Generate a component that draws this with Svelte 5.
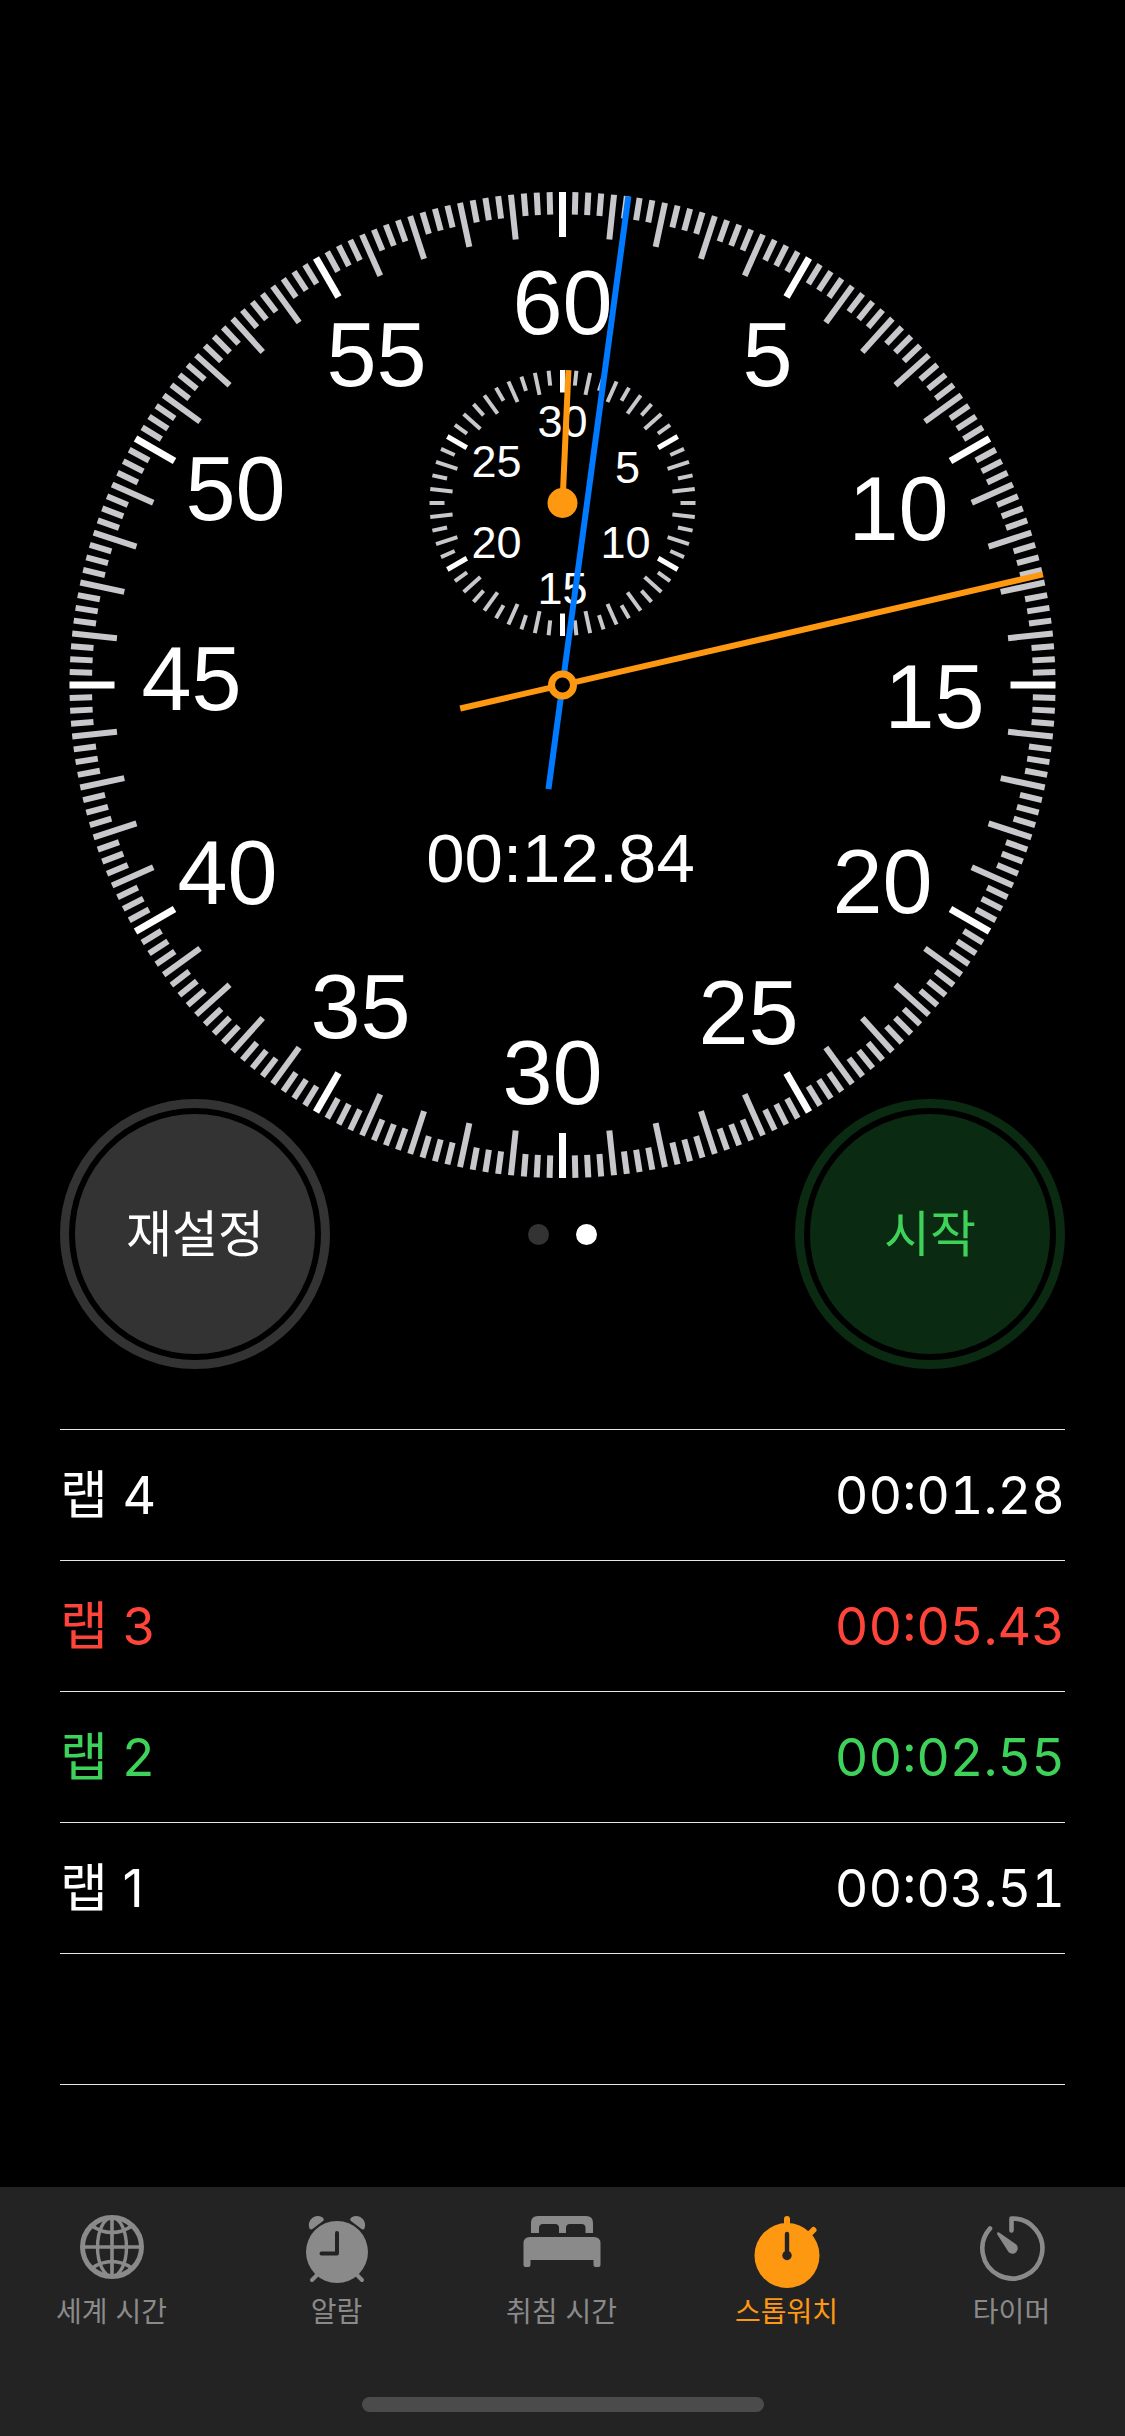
<script>
  const mainTicks = Array.from({ length: 240 }, (_, i) => ({
    angle: i * 1.5,
    kind: i % 20 === 0 ? 'hour' : i % 4 === 0 ? 'long' : 'short'
  }));
  const subTicks = Array.from({ length: 60 }, (_, i) => ({
    angle: i * 6,
    kind: i % 10 === 0 ? 'hour' : i % 2 === 0 ? 'long' : 'short'
  }));

  // Numeral centres, relative to the centre of the main dial.
  const mainNumbers = [
    [60, 0, -382], [5, 205, -330], [10, 336, -176], [15, 372, 12],
    [20, 320, 197], [25, 186, 328], [30, -10, 388], [35, -202, 322],
    [40, -335, 188], [45, -371, -6], [50, -327, -196], [55, -186, -330]
  ];
  // Numeral centres, relative to the centre of the minute dial.
  const subNumbers = [
    [30, 0, -82], [5, 65, -36], [10, 63, 39], [15, 0, 85], [20, -66, 39], [25, -66, -42]
  ];

  const elapsed = 12.84;
  const lapElapsed = 1.28;

  const laps = [
    { name: '랩 4', time: '00:01.28', tone: '' },
    { name: '랩 3', time: '00:05.43', tone: 'slow' },
    { name: '랩 2', time: '00:02.55', tone: 'fast' },
    { name: '랩 1', time: '00:03.51', tone: '' }
  ];

  const tabs = [
    { id: 'world', label: '세계 시간' },
    { id: 'alarm', label: '알람' },
    { id: 'bed', label: '취침 시간' },
    { id: 'stopwatch', label: '스톱워치' },
    { id: 'timer', label: '타이머' }
  ];
  let active = $state('stopwatch');
</script>

<div class="app">
  <main>
    <svg class="dial" viewBox="-494.5 -494 989 988" role="img" aria-label="스톱워치">
      {#each mainTicks as t}
        <line class="tick {t.kind}" y1="-493" y2={t.kind === 'short' ? -470.5 : -448} transform="rotate({t.angle})" />
      {/each}
      {#each mainNumbers as [n, x, y]}
        <text class="num" {x} y={y + 31}>{n}</text>
      {/each}

      <g transform="translate(0 -182)">
        {#each subTicks as t}
          <line class="tick sub {t.kind}" y1="-133" y2={t.kind === 'short' ? -118 : -110.5} transform="rotate({t.angle})" />
        {/each}
        {#each subNumbers as [n, x, y]}
          <text class="num small" {x} y={y + 16}>{n}</text>
        {/each}
        <line class="hand orange" y1="0" y2="-133" transform="rotate({elapsed / 5})" />
        <circle class="hub" r="15" />
      </g>

      <text class="num time" x="-2" y="197">00:12.84</text>
      <line class="hand blue" y1="105" y2="-493" transform="rotate({lapElapsed * 6})" />
      <line class="hand orange" y1="105" y2="-493" transform="rotate({elapsed * 6})" />
      <circle class="ring" r="11" />
    </svg>

    <div class="controls">
      <button class="round reset" type="button"><span>재설정</span></button>
      <div class="dots" aria-hidden="true"><i></i><i class="on"></i></div>
      <button class="round start" type="button"><span>시작</span></button>
    </div>

    <table class="laps">
      <tbody>
        {#each laps as lap}
          <tr class={lap.tone}>
            <th scope="row">{lap.name}</th>
            <td>{lap.time}</td>
          </tr>
        {/each}
        <tr><th></th><td></td></tr>
      </tbody>
    </table>
  </main>

  <footer>
    <nav>
      {#each tabs as tab}
        <button class="tab" class:active={active === tab.id} type="button" onclick={() => (active = tab.id)}>
          <svg class="icon" viewBox="0 0 80 76" aria-hidden="true">
            {#if tab.id === 'world'}
              <g class="stroke">
                <circle cx="40" cy="32" r="29.5" stroke-width="5" />
                <ellipse cx="40" cy="32" rx="14.5" ry="29.5" stroke-width="3.4" />
                <path d="M40 2v60M10 32h60" stroke-width="3.6" />
                <path d="M20 11q20 13 40 0M20 53q20-13 40 0" stroke-width="3.4" />
              </g>
            {:else if tab.id === 'alarm'}
              <g class="stroke round-cap" stroke-width="4"><path d="M22 58l-7 7M58 58l7 7" /></g>
              <circle cx="40" cy="37" r="31" />
              <path d="M12.500 13.500C10 7 15 1 21 1c2.500 0 4.500 1 5.500 2.500q1 1.500-.5 2.500L15.500 14q-2 1.200-3-.5zM67.500 13.500C70 7 65 1 59 1c-2.500 0-4.500 1-5.500 2.500q-1 1.500.5 2.500l10.500 8q2 1.200 3-.5z" />
              <path class="cut" d="M40 18v20.500H24.500" stroke-width="4" />
            {:else if tab.id === 'bed'}
              <path d="M9 18V8q0-7 7-7h48q7 0 7 7v10h-7.500v-5q0-4-4-4h-11.500q-4 0-4 4v5h-7v-5q0-4-4-4H21q-4 0-4 4v5z" />
              <path d="M1.500 28.500q0-6.500 6.500-6.500h64q6.500 0 6.500 6.500V50q0 2-2 2h-3q-2 0-2-2v-5h-63v5q0 2-2 2h-3q-2 0-2-2z" />
            {:else if tab.id === 'stopwatch'}
              <g class="stroke round-cap" stroke-width="6"><path d="M40 4v10M66.500 15l-5 5" /></g>
              <circle cx="40" cy="40.500" r="32.500" />
              <path class="cut" d="M40 19v22" stroke-width="4.400" />
              <circle class="cut-dot" cx="40" cy="40.500" r="4.700" />
            {:else}
              <path class="stroke round-cap" d="M39.500 15.500V3.500A30 30 0 1 1 18 13.500" stroke-width="4.600" />
              <path d="M25.500 17.500q-.8 1-.2 2L36.500 37a5.400 5.400 0 1 0 7.800-7.500L27.500 17.800q-1.200-.9-2-.3z" />
            {/if}
          </svg>
          <span>{tab.label}</span>
        </button>
      {/each}
    </nav>
    <div class="home"></div>
  </footer>
</div>

<style>
  :global(body) {
    margin: 0;
    background: #000;
  }
  .app {
    min-height: 100vh;
    display: flex;
    flex-direction: column;
    background: #000;
    color: #fff;
    font-family: Inter, 'Noto Sans CJK KR', sans-serif;
  }
  main {
    flex: 1;
    display: flex;
    flex-direction: column;
    padding: 191px 60px 0;
  }
  .dial {
    display: block;
    margin: 0 8px -80px;
  }
  .tick {
    stroke: #c7c7cc;
    stroke-width: 6;
  }
  .tick.hour {
    stroke: #fff;
    stroke-width: 7;
  }
  .tick.sub {
    stroke-width: 4;
  }
  .tick.sub.hour {
    stroke-width: 5;
  }
  .num {
    fill: #fff;
    font-family: 'Liberation Sans', Arial, sans-serif;
    font-size: 90px;
    text-anchor: middle;
  }
  .num.small {
    font-size: 45px;
  }
  .num.time {
    font-size: 69px;
  }
  .hand {
    stroke-width: 6;
  }
  .orange {
    stroke: #ff9811;
  }
  .blue {
    stroke: #007aff;
  }
  .hub {
    fill: #ff9811;
  }
  .ring {
    fill: #000;
    stroke: #ff9811;
    stroke-width: 7;
  }
  button {
    appearance: none;
    border: 0;
    margin: 0;
    padding: 0;
    background: none;
    color: inherit;
    font: inherit;
    cursor: pointer;
  }
  .controls {
    display: flex;
    justify-content: space-between;
    align-items: center;
  }
  .round {
    width: 270px;
    height: 270px;
    box-sizing: border-box;
    border: 9px solid var(--tint);
    border-radius: 50%;
    padding: 6px;
    display: flex;
    font-size: 50px;
    line-height: 60px;
  }
  .round span {
    flex: 1;
    align-self: stretch;
    display: flex;
    align-items: center;
    justify-content: center;
    border-radius: 50%;
    background: var(--tint);
  }
  .reset {
    --tint: #333;
  }
  .start {
    --tint: #0a2a12;
    color: #3fd25b;
  }
  .dots {
    display: flex;
    gap: 27px;
  }
  .dots i {
    width: 21px;
    height: 21px;
    border-radius: 50%;
    background: #333;
  }
  .dots .on {
    background: #fff;
  }
  .laps {
    width: 100%;
    margin-top: 60px;
    border-collapse: separate;
    border-spacing: 0;
    border-top: 1px solid #e5e5ea;
    line-height: 60px;
  }
  .laps th,
  .laps td {
    box-sizing: border-box;
    height: 131px;
    padding: 1px 0 0;
    border-bottom: 1px solid #e5e5ea;
    font-size: 52px;
    font-weight: 400;
    text-align: left;
  }
  .laps td {
    text-align: right;
    font-variant-numeric: tabular-nums;
  }
  .slow {
    color: #ff443a;
  }
  .fast {
    color: #3fd25b;
  }
  footer {
    background: #232323;
    padding: 28px 0 24px;
  }
  nav {
    display: grid;
    grid-template-columns: repeat(5, 1fr);
  }
  .tab {
    display: flex;
    flex-direction: column;
    align-items: center;
    gap: 1px;
    padding-right: 2px;
    color: #8a8a8a;
    font-size: 28px;
    line-height: 40px;
  }
  .tab.active {
    color: #ff9811;
  }
  .icon {
    width: 80px;
    height: 76px;
    fill: currentColor;
  }
  .icon .stroke {
    fill: none;
    stroke: currentColor;
  }
  .icon .round-cap {
    stroke-linecap: round;
    stroke-linejoin: round;
  }
  .icon .cut {
    fill: none;
    stroke: #232323;
    stroke-linecap: round;
    stroke-linejoin: round;
  }
  .icon .cut-dot {
    fill: #232323;
  }
  .home {
    width: 402px;
    height: 15px;
    margin: 65px auto 0;
    border-radius: 8px;
    background: #4b4b4b;
  }
</style>
